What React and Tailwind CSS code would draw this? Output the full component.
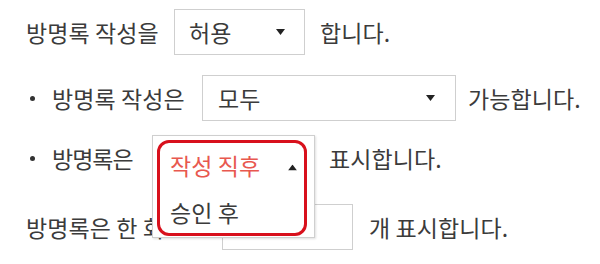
const FONT = { fontFamily: '"Malgun Gothic", "Noto Sans CJK KR", "Noto Sans", sans-serif' };

const Caret = ({ up = false }) => (
  <svg width="9" height="6" viewBox="0 0 9 6" className="shrink-0">
    <path d={up ? "M4.5 0 L9 6 L0 6 Z" : "M0 0 L9 0 L4.5 6 Z"} fill="#222" />
  </svg>
);

const Bullet = () => (
  <span className="ml-[4px] mr-[17px] h-[5px] w-[5px] shrink-0 rounded-full bg-[#333]" />
);

const Select = ({ value, className }) => (
  <div
    className={`flex h-[46px] shrink-0 items-center justify-between border border-[#cfcfcf] bg-white ${className}`}
  >
    <span>{value}</span>
    <Caret />
  </div>
);

export default function App() {
  return (
    <div
      className="h-[264px] w-[600px] overflow-hidden bg-white pl-[26px] pt-[9px] text-[23px] leading-none tracking-[0.1px] text-[#3b3b3b]"
      style={FONT}
    >
      <div className="flex h-[46px] items-center">
        <span className="w-[132px] shrink-0 whitespace-nowrap">방명록 작성을</span>
        <Select value="허용" className="ml-[16px] w-[131px] pl-[14px] pr-[19px]" />
        <span className="ml-[15px]">합니다.</span>
      </div>

      <div className="mt-[20px] flex h-[46px] items-center">
        <Bullet />
        <span className="w-[140px] shrink-0 whitespace-nowrap">방명록 작성은</span>
        <Select value="모두" className="ml-[10px] w-[254px] pl-[15px] pr-[20px]" />
        <span className="ml-[12px]">가능합니다.</span>
      </div>

      <div className="relative z-10 mt-[14px] flex h-[46px] items-center">
        <Bullet />
        <span className="w-[85px] shrink-0 whitespace-nowrap tracking-[-1px]">방명록은</span>
        <div className="relative ml-[15px] h-[46px] w-[163px] shrink-0">
          <div className="absolute left-0 top-0 h-[103px] w-[163px] border border-[#cfcfcf] bg-white shadow-[1px_1px_2px_rgba(0,0,0,0.12)]">
            <div className="absolute left-[4px] top-[4px] h-[96px] w-[150px] rounded-[12px] border-[3px] border-[#d8101c]" />
            <div className="absolute left-[17px] top-[29px] flex w-[127px] -translate-y-1/2 items-center justify-between">
              <span className="text-[#e8584f]">작성 직후</span>
              <span className="mt-[4px]">
                <Caret up />
              </span>
            </div>
            <div className="absolute left-[17px] top-[76px] -translate-y-1/2">승인 후</div>
          </div>
        </div>
        <span className="ml-[14px]">표시합니다.</span>
      </div>

      <div className="mt-[23px] flex h-[46px] items-center">
        <span className="w-[196px] shrink-0 whitespace-nowrap">방명록은 한 회</span>
        <div className="h-[46px] w-[131px] shrink-0 border border-[#cfcfcf] bg-white" />
        <span className="ml-[16px]">개 표시합니다.</span>
      </div>
    </div>
  );
}
